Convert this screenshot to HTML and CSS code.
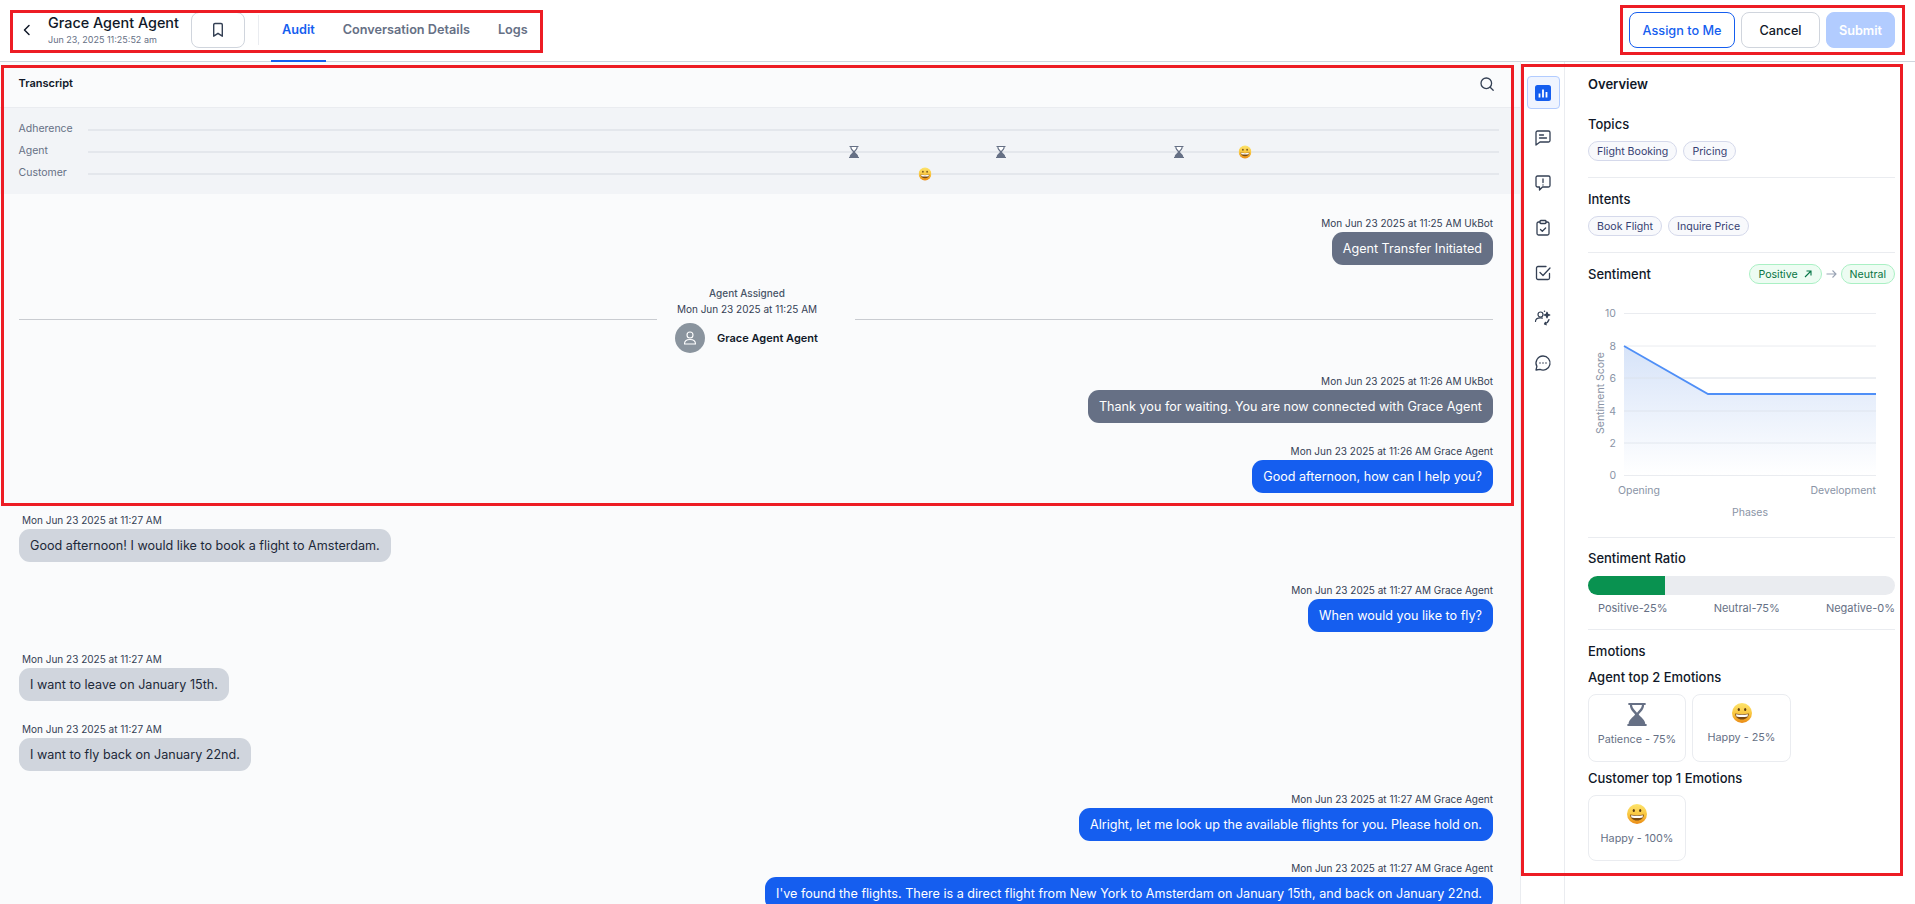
FILE: index.html
```html
<!DOCTYPE html>
<html lang="en">
<head>
<meta charset="utf-8">
<title>Audit - Grace Agent Agent</title>
<link rel="stylesheet" href="styles.css">
</head>
<body>
<svg class="defs" width="0" height="0" aria-hidden="true">
  <defs>
    <linearGradient id="faceGrad" x1="0" y1="0" x2="0" y2="1">
      <stop offset="0%" stop-color="#fde46c"/>
      <stop offset="55%" stop-color="#f9c53f"/>
      <stop offset="100%" stop-color="#ea8a14"/>
    </linearGradient>
    <linearGradient id="areaGrad" x1="0" y1="0" x2="0" y2="1">
      <stop offset="0%" stop-color="#cfdef7"/>
      <stop offset="100%" stop-color="#ffffff"/>
    </linearGradient>
    <symbol id="face" viewBox="0 0 20 20">
      <circle cx="10" cy="10" r="10" fill="url(#faceGrad)"/>
      <ellipse cx="6.8" cy="6.600" rx="1.100" ry="1.500" fill="#5b3a12"/>
      <ellipse cx="13.2" cy="6.600" rx="1.100" ry="1.500" fill="#5b3a12"/>
      <path d="M3.200 10.600c4.400 1 9.200 1 13.600 0 .2 3.600-2.800 6-6.800 6s-7-2.400-6.800-6z" fill="#7a4a12"/>
      <path d="M4 11.200c4 .8 8 .8 12 0l-.4 2.300c-3.600.7-7.600.7-11.200 0z" fill="#fff"/>
    </symbol>
    <symbol id="glass" viewBox="0 0 20 24">
      <path d="M1 0h18v2.200h-1.600c0 4.400-3 6.600-5.600 9.800 2.600 3.200 6.800 5.800 6.800 9.800H20V24H0v-2.200h1.200c0-4 4.200-6.600 6.800-9.800C5.400 8.800 2.600 6.600 2.600 2.200H1z" fill="#667085"/>
      <path d="M4.800 2.200h10.400c-.2 3.200-3.400 5.800-5.200 8-1.800-2.200-5-4.800-5.200-8z" fill="#fff"/>
    </symbol>
  </defs>
</svg>

<div class="app">
  <header class="topbar">
    <div class="top-left">
      <button class="back" aria-label="Back">
        <svg width="16" height="16" viewBox="0 0 16 16"><path d="M10 3.500 5.500 8l4.500 4.500" fill="none" stroke="#101828" stroke-width="1.500" stroke-linecap="round" stroke-linejoin="round"/></svg>
      </button>
      <div class="title-block">
        <div class="title">Grace Agent Agent</div>
        <div class="subtitle">Jun 23, 2025 11:25:52 am</div>
      </div>
      <button class="bookmark" aria-label="Bookmark">
        <svg width="16" height="16" viewBox="0 0 16 16"><path d="M3.700 2.800c0-.8.600-1.300 1.300-1.300h6c.700 0 1.300.5 1.300 1.300v11.400L8 11.300l-4.300 2.900z" fill="none" stroke="#344054" stroke-width="1.400" stroke-linejoin="round"/></svg>
      </button>
      <span class="vdivider"></span>
      <nav class="tabs">
        <a class="tab active">Audit</a>
        <a class="tab">Conversation Details</a>
        <a class="tab">Logs</a>
      </nav>
    </div>
    <div class="top-actions">
      <button class="btn btn-assign">Assign to Me</button>
      <button class="btn btn-cancel">Cancel</button>
      <button class="btn btn-submit">Submit</button>
    </div>
  </header>

  <div class="content">
    <main class="transcript">
      <div class="tr-head">
        <span class="tr-title">Transcript</span>
        <svg class="tr-search" width="16" height="16" viewBox="0 0 16 16"><circle cx="7.300" cy="7.300" r="5.300" fill="none" stroke="#344054" stroke-width="1.300"/><path d="m11.200 11.200 3 3" stroke="#344054" stroke-width="1.300" stroke-linecap="round"/></svg>
      </div>
      <div class="timeline">
        <div class="tl-row"><span class="tl-label">Adherence</span><div class="tl-track"></div></div>
        <div class="tl-row"><span class="tl-label">Agent</span>
          <div class="tl-track">
            <svg class="pin pin-glass" style="left:54.300%"><use href="#glass"/></svg>
            <svg class="pin pin-glass" style="left:64.700%"><use href="#glass"/></svg>
            <svg class="pin pin-glass" style="left:77.300%"><use href="#glass"/></svg>
            <svg class="pin pin-face" style="left:82%"><use href="#face"/></svg>
          </div>
        </div>
        <div class="tl-row"><span class="tl-label">Customer</span>
          <div class="tl-track">
            <svg class="pin pin-face" style="left:59.300%"><use href="#face"/></svg>
          </div>
        </div>
      </div>
      <div class="messages">
        <div class="msg right">
          <div class="meta">Mon Jun 23 2025 at 11:25 AM UkBot</div>
          <div class="bubble bot">Agent Transfer Initiated</div>
        </div>
        <div class="assigned">
          <div class="assigned-card">
            <div class="assigned-label">Agent Assigned</div>
            <div class="assigned-date">Mon Jun 23 2025 at 11:25 AM</div>
            <div class="assigned-agent">
              <span class="avatar">
                <svg width="16" height="16" viewBox="0 0 16 16" fill="none" stroke="#fff" stroke-width="1.100" stroke-linecap="round" stroke-linejoin="round"><circle cx="8" cy="5" r="3"/><path d="M2.500 14c0-3 2.300-4.500 5.500-4.500s5.500 1.500 5.500 4.500z"/></svg>
              </span>
              <span class="agent-name">Grace Agent Agent</span>
            </div>
          </div>
        </div>
        <div class="msg right">
          <div class="meta">Mon Jun 23 2025 at 11:26 AM UkBot</div>
          <div class="bubble bot">Thank you for waiting. You are now connected with Grace Agent</div>
        </div>
        <div class="msg right">
          <div class="meta">Mon Jun 23 2025 at 11:26 AM Grace Agent</div>
          <div class="bubble agent">Good afternoon, how can I help you?</div>
        </div>
        <div class="msg left">
          <div class="meta">Mon Jun 23 2025 at 11:27 AM</div>
          <div class="bubble customer">Good afternoon! I would like to book a flight to Amsterdam.</div>
        </div>
        <div class="msg right">
          <div class="meta">Mon Jun 23 2025 at 11:27 AM Grace Agent</div>
          <div class="bubble agent">When would you like to fly?</div>
        </div>
        <div class="msg left">
          <div class="meta">Mon Jun 23 2025 at 11:27 AM</div>
          <div class="bubble customer">I want to leave on January 15th.</div>
        </div>
        <div class="msg left">
          <div class="meta">Mon Jun 23 2025 at 11:27 AM</div>
          <div class="bubble customer">I want to fly back on January 22nd.</div>
        </div>
        <div class="msg right">
          <div class="meta">Mon Jun 23 2025 at 11:27 AM Grace Agent</div>
          <div class="bubble agent">Alright, let me look up the available flights for you. Please hold on.</div>
        </div>
        <div class="msg right">
          <div class="meta">Mon Jun 23 2025 at 11:27 AM Grace Agent</div>
          <div class="bubble agent">I've found the flights. There is a direct flight from New York to Amsterdam on January 15th, and back on January 22nd.</div>
        </div>
      </div>
    </main>

    <aside class="rail">
      <button class="rail-btn active" aria-label="Overview">
        <svg width="16" height="16" viewBox="0 0 16 16"><rect width="16" height="16" rx="2.500" fill="#155eef"/><path d="M4.500 8.500v4M8 4.500v8M11.500 7v5.500" stroke="#fff" stroke-width="1.800"/></svg>
      </button>
      <button class="rail-btn" aria-label="Messages">
        <svg width="18" height="18" viewBox="0 0 18 18" fill="none" stroke="#344054" stroke-width="1.300" stroke-linecap="round" stroke-linejoin="round"><path d="M3.500 2h11c.8 0 1.500.7 1.500 1.500v8c0 .8-.7 1.500-1.500 1.500H6l-4 3V3.500C2 2.700 2.700 2 3.500 2z"/><path d="M5.500 6h4M5.500 9h7"/></svg>
      </button>
      <button class="rail-btn" aria-label="Alerts">
        <svg width="18" height="18" viewBox="0 0 18 18" fill="none" stroke="#344054" stroke-width="1.300" stroke-linecap="round" stroke-linejoin="round"><path d="M3.500 2h11c.8 0 1.500.7 1.500 1.500v8c0 .8-.7 1.500-1.500 1.500h-6L5.500 16v-3h-2c-.8 0-1.500-.7-1.500-1.500v-8C2 2.700 2.700 2 3.500 2z"/><path d="M9 5v3.600M9 10.800v.2"/></svg>
      </button>
      <button class="rail-btn" aria-label="Checklist">
        <svg width="18" height="18" viewBox="0 0 18 18" fill="none" stroke="#344054" stroke-width="1.300" stroke-linecap="round" stroke-linejoin="round"><path d="M6 3H4.500C3.700 3 3 3.700 3 4.500v10c0 .8.700 1.500 1.500 1.500h9c.8 0 1.500-.7 1.500-1.500v-10c0-.8-.7-1.500-1.500-1.500H12"/><rect x="6" y="1.500" width="6" height="3" rx=".8"/><path d="m6.500 10.500 1.800 1.800 3.300-3.300"/></svg>
      </button>
      <button class="rail-btn" aria-label="Tasks">
        <svg width="18" height="18" viewBox="0 0 18 18" fill="none" stroke="#344054" stroke-width="1.300" stroke-linecap="round" stroke-linejoin="round"><path d="M15.500 9.500v4.500c0 .8-.7 1.500-1.500 1.500H4c-.8 0-1.500-.7-1.500-1.500V4c0-.8.700-1.500 1.500-1.500h8"/><path d="m6 8.500 3 3 7-7.500"/></svg>
      </button>
      <button class="rail-btn" aria-label="Agent coaching">
        <svg width="18" height="18" viewBox="0 0 18 18" fill="none" stroke="#344054" stroke-width="1.200" stroke-linecap="round" stroke-linejoin="round"><circle cx="6.500" cy="5.500" r="2.500"/><path d="M1.500 12.500c0-2.400 2.200-3.700 5-3.700.7 0 1.300.1 1.900.3"/><path d="M15 10.500c-.5 2-2 3.500-4.500 4.500M10.500 15l1.800.8M10.500 15l.9-1.700"/><path d="M13 3.200l.8 2 2 .8-2 .8-.8 2-.8-2-2-.8 2-.8z" fill="#344054"/><path d="M10.500 2.200h.01" stroke-width="1.500"/></svg>
      </button>
      <button class="rail-btn" aria-label="Chat">
        <svg width="18" height="18" viewBox="0 0 18 18" fill="none" stroke="#344054" stroke-width="1.300" stroke-linecap="round" stroke-linejoin="round"><path d="M9 2a7 7 0 1 1-3 13.300L2 16l.9-3.600A7 7 0 0 1 9 2z"/><path d="M6 9h.01M9 9h.01M12 9h.01" stroke-width="1.600"/></svg>
      </button>
    </aside>

    <section class="panel">
      <h2 class="panel-title">Overview</h2>
      <div class="block">
        <h3 class="h">Topics</h3>
        <div class="chips"><span class="chip">Flight Booking</span><span class="chip">Pricing</span></div>
      </div>
      <div class="block">
        <h3 class="h">Intents</h3>
        <div class="chips"><span class="chip">Book Flight</span><span class="chip">Inquire Price</span></div>
      </div>
      <div class="block block-sentiment">
        <div class="sent-head">
          <h3 class="h">Sentiment</h3>
          <div class="sent-flow">
            <span class="chip chip-green">Positive
              <svg width="10" height="10" viewBox="0 0 10 10"><path d="M2 8l6-6M3.500 2H8v4.500" fill="none" stroke="#067647" stroke-width="1.100"/></svg>
            </span>
            <svg width="11" height="10" viewBox="0 0 11 10"><path d="M.5 5h9.500M6.500 1.500 10 5 6.500 8.500" fill="none" stroke="#98a2b3" stroke-width="1.100"/></svg>
            <span class="chip chip-green">Neutral</span>
          </div>
        </div>
        <svg class="chart" viewBox="0 0 307 238" width="307" height="238">
          <path class="grid" d="M36 14.500h252M36 47h252M36 79h252M36 112h252M36 144h252M36 176.500h252"/>
          <path d="M36 47 120 95H288V176H36z" fill="url(#areaGrad)" opacity=".85"/>
          <path class="grid-over" d="M36 79h252M36 112h252M36 144h252"/>
          <path d="M36 47 120 95H288" fill="none" stroke="#4f8ff7" stroke-width="1.800"/>
          <g class="axis">
            <text x="28" y="18" text-anchor="end">10</text>
            <text x="28" y="50.500" text-anchor="end">8</text>
            <text x="28" y="83" text-anchor="end">6</text>
            <text x="28" y="116" text-anchor="end">4</text>
            <text x="28" y="148" text-anchor="end">2</text>
            <text x="28" y="180" text-anchor="end">0</text>
            <text x="30" y="195">Opening</text>
            <text x="288" y="195" text-anchor="end">Development</text>
            <text x="162" y="217" text-anchor="middle">Phases</text>
            <text x="0" y="0" text-anchor="middle" transform="translate(16 94) rotate(-90)">Sentiment Score</text>
          </g>
        </svg>
      </div>
      <div class="block block-ratio">
        <h3 class="h">Sentiment Ratio</h3>
        <div class="ratio-bar"><div class="ratio-fill" style="width:25%"></div></div>
        <div class="ratio-labels"><span>Positive-25%</span><span>Neutral-75%</span><span>Negative-0%</span></div>
      </div>
      <div class="emotions">
        <h3 class="h">Emotions</h3>
        <h3 class="h h-sub">Agent top 2 Emotions</h3>
        <div class="cards">
          <div class="card card-glass"><svg class="card-glass-icon"><use href="#glass"/></svg><span class="card-text">Patience - 75%</span></div>
          <div class="card"><svg class="card-face"><use href="#face"/></svg><span class="card-text">Happy - 25%</span></div>
        </div>
        <h3 class="h h-sub">Customer top 1 Emotions</h3>
        <div class="cards">
          <div class="card card-wide"><svg class="card-face"><use href="#face"/></svg><span class="card-text">Happy - 100%</span></div>
        </div>
      </div>
    </section>
  </div>
</div>

<div class="mark mark-tabs"></div>
<div class="mark mark-actions"></div>
<div class="mark mark-transcript"></div>
<div class="mark mark-panel"></div>
</body>
</html>
```

FILE: styles.css
```css
* { box-sizing: border-box; }
html, body { margin: 0; height: 100%; overflow: hidden; }
body { font-family: Inter, "Liberation Sans", sans-serif; color: #101828; background: #fff; position: relative; }
button { font-family: inherit; cursor: pointer; }
.defs { position: absolute; }
.app { display: flex; flex-direction: column; height: 904px; }

/* top bar */
.topbar { flex: 0 0 62px; display: flex; align-items: flex-start; justify-content: space-between; border-bottom: 1px solid #d0d5dd; padding: 12px 20px 0 19px; }
.top-left { display: flex; align-items: center; height: 36px; }
.back { width: 16px; height: 16px; padding: 0; border: 0; background: none; display: flex; margin-right: 13px; }
.title-block { width: 143px; }
.title { font-size: 14.400px; font-weight: 500; line-height: 20px; }
.subtitle { font-size: 9px; line-height: 14px; color: #667085; }
.bookmark { width: 54px; height: 36px; display: flex; align-items: center; justify-content: center; background: #fff; border: 1px solid #d0d5dd; border-radius: 8px; padding: 0; }
.vdivider { width: 1px; height: 30px; background: #eaecf0; margin: 0 13px; }
.tabs { display: flex; gap: 28px; margin-left: 10px; }
.tab { position: relative; font-size: 12.700px; font-weight: 600; line-height: 20px; color: #667085; }
.tab.active { color: #155eef; }
.tab.active::after { content: ""; position: absolute; left: -11px; right: -11px; top: 40px; height: 2px; background: #155eef; }
.top-actions { display: flex; gap: 6px; }
.btn { height: 36px; border-radius: 8px; font-size: 12.700px; font-weight: 500; padding: 0; background: #fff; }
.btn-assign { width: 106px; color: #155eef; border: 1px solid #155eef; }
.btn-cancel { width: 79px; color: #101828; border: 1px solid #d0d5dd; }
.btn-submit { width: 69px; color: #fff; font-weight: 600; background: #b2ccff; border: 1px solid #b2ccff; }

.content { flex: 1; display: flex; min-height: 0; }

/* transcript */
.transcript { flex: 0 0 1521px; background: #fafbfc; border-right: 1px solid #eaecf0; overflow: hidden; }
.tr-head { height: 46px; display: flex; align-items: flex-start; justify-content: space-between; padding: 14px 25px 0 18.500px; border-bottom: 1px solid #eaecf0; }
.tr-title { font-size: 11px; font-weight: 600; line-height: 14px; }
.timeline { background: #f2f4f7; height: 86px; padding: 10px 21px 0 18.500px; display: flex; flex-direction: column; }
.tl-row { height: 21.700px; display: flex; align-items: center; }
.tl-label { flex: 0 0 69.500px; font-size: 10.500px; color: #667085; line-height: 14px; padding-top: 1px; }
.tl-track { position: relative; flex: 1; height: 2px; margin-top: 3px; background: #e4e7ec; }
.pin { position: absolute; top: 1px; transform: translate(-50%, -50%); }
.pin-glass { width: 10px; height: 13px; }
.pin-face { width: 13px; height: 14px; }

.messages { padding: 21px 27px 0 19px; display: flex; flex-direction: column; }
.msg { display: flex; flex-direction: column; margin-bottom: 19.600px; }
.msg.right { align-items: flex-end; }
.msg.left { align-items: flex-start; }
.meta { font-size: 10px; line-height: 16px; color: #344054; margin-bottom: 1px; }
.msg.left .meta { padding-left: 3px; }
.bubble { font-size: 12.600px; line-height: 17px; padding: 8px 11px; border-radius: 11px; }
.bubble.bot { background: #667085; color: #fff; }
.bubble.agent { background: #155eef; color: #fff; }
.bubble.customer { background: #d0d5dd; color: #1d2939; }

.assigned { position: relative; height: 88.400px; display: flex; justify-content: center; }
.assigned::before { content: ""; position: absolute; left: 0; right: 0; top: 34px; height: 1px; background: #c9ccd1; }
.assigned-card { position: relative; width: 198px; background: #fafbfc; text-align: center; height: 70px; }
.assigned-label { font-size: 10px; line-height: 16px; font-weight: 500; color: #475467; padding-right: 18px; }
.assigned-date { font-size: 10px; line-height: 16px; color: #344054; padding-right: 18px; }
.assigned-agent { display: flex; align-items: center; padding: 6px 0 0 18px; }
.avatar { width: 30px; height: 30px; border-radius: 50%; background: #8a949e; display: flex; align-items: center; justify-content: center; }
.agent-name { font-size: 11px; font-weight: 600; margin-left: 12px; }

/* rail */
.rail { flex: 0 0 44px; border-right: 1px solid #eaecf0; display: flex; flex-direction: column; align-items: center; padding: 14px 0 0 1px; gap: 12px; }
.rail-btn { width: 33px; height: 33px; padding: 0; background: none; border: 1px solid transparent; border-radius: 4px; display: flex; align-items: center; justify-content: center; }
.rail-btn.active { background: #eff4ff; border-color: #b2ccff; }

/* panel */
.panel { flex: 1; padding: 12px 20px 0 23px; min-width: 0; }
.panel-title { margin: 0 0 20px; font-size: 13px; font-weight: 600; line-height: 20px; }
.h { margin: 0; font-size: 13px; font-weight: 500; line-height: 20px; }
.block { border-bottom: 1px solid #eaecf0; padding-bottom: 16px; margin-bottom: 11px; }
.chips { display: flex; gap: 6px; margin-top: 7px; }
.chip { display: inline-flex; align-items: center; gap: 5px; height: 20px; padding: 0 8px; font-size: 10.600px; color: #363f72; background: #f8f9fc; border: 1px solid #d5d9eb; border-radius: 10px; }
.chip-green { background: #edfcf2; border-color: #aaf0c4; color: #087443; }
.block-sentiment { padding-bottom: 0; margin-top: 3px; margin-bottom: 10px; }
.sent-head { display: flex; justify-content: space-between; align-items: center; height: 20px; }
.sent-flow { display: flex; align-items: center; gap: 4px; }
.chart { display: block; margin-top: 14.500px; }
.grid { stroke: #eaecf0; stroke-width: 1; fill: none; }
.grid-over { stroke: #dde2ea; stroke-width: 1; fill: none; opacity: .7; }
.axis text { font-family: Inter, "Liberation Sans", sans-serif; font-size: 10.500px; fill: #8a94a6; }
.block-ratio { padding-bottom: 13px; }
.ratio-bar { height: 19px; margin-top: 8px; border-radius: 10px; background: #eaecf0; overflow: hidden; }
.ratio-fill { height: 100%; background: #099250; }
.ratio-labels { display: flex; justify-content: space-between; padding-left: 10px; margin-top: 5px; font-size: 11px; line-height: 16px; color: #667085; }
.h-sub { margin-top: 6px; }
.cards { display: flex; gap: 6px; margin-top: 7px; }
.card { width: 99px; height: 68px; border: 1px solid #eaecf0; border-radius: 8px; display: flex; flex-direction: column; align-items: center; padding-top: 8px; }
.card-wide { width: 98px; height: 66px; }
.card-glass { width: 98px; }
.card-glass-icon { width: 20px; height: 23px; margin-bottom: 6px; }
.card-face { width: 20px; height: 20px; margin-bottom: 7px; }
.card-text { font-size: 10.800px; line-height: 16px; color: #667085; }

/* annotation frames */
.mark { position: absolute; border: 3px solid #ed1c24; pointer-events: none; }
.mark-tabs { left: 10px; top: 10px; width: 533px; height: 43px; }
.mark-actions { left: 1620px; top: 5px; width: 285px; height: 50px; }
.mark-transcript { left: 1px; top: 65px; width: 1513px; height: 441px; }
.mark-panel { left: 1521px; top: 64px; width: 382px; height: 812px; }
```
